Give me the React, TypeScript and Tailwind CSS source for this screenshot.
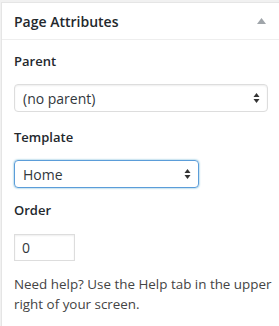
import React from "react";

function Arrows() {
  return (
    <svg width="7" height="11" viewBox="0 0 7 11" className="absolute right-[7px] top-1/2 -translate-y-1/2">
      <path d="M3.5 0.5 L6.5 4.5 L0.5 4.5 Z" fill="#333" />
      <path d="M0.5 6.5 L6.5 6.5 L3.5 10.5 Z" fill="#333" />
    </svg>
  );
}

export default function App() {
  return (
    <div
      className="w-[279px] h-[326px] bg-[#f1f1f1] pt-[2px] pl-[1px] overflow-hidden"
      style={{ fontFamily: '"Open Sans", "Noto Sans", sans-serif' }}
    >
      <div className="w-[290px] h-[340px] bg-white border border-[#e5e5e5]">
        <div className="h-[37px] border-b border-[#eeeeee] flex items-center justify-between pl-[12px] pr-[24px]">
          <span className="text-[14px] font-semibold text-[#23282d]">Page Attributes</span>
          <svg width="9" height="6" viewBox="0 0 9 6">
            <path d="M4.5 0 L9 6 L0 6 Z" fill="#a0a5aa" />
          </svg>
        </div>
        <div className="pl-[12px] pt-[11px] text-[#444]">
          <div className="text-[13px] font-semibold text-[#23282d] leading-[20px]">Parent</div>
          <div className="relative mt-[13px] w-[254px] h-[28px] border border-[#dddddd] rounded-[4px] flex items-center pl-[8px] text-[14px] text-[#32373c] shadow-[inset_0_1px_2px_rgba(0,0,0,0.07)]">
            (no parent)
            <Arrows />
          </div>
          <div className="mt-[15px] text-[13px] font-semibold text-[#23282d] leading-[20px]">Template</div>
          <div className="relative mt-[13px] w-[185px] h-[28px] border border-[#5b9dd9] rounded-[4px] flex items-center pl-[8px] text-[14px] text-[#32373c] shadow-[0_0_2px_rgba(30,140,190,0.8)]">
            Home
            <Arrows />
          </div>
          <div className="mt-[12px] text-[13px] font-semibold text-[#23282d] leading-[20px]">Order</div>
          <div className="mt-[14px] w-[61px] h-[27px] border border-[#dddddd] flex items-center pl-[7px] text-[14px] text-[#32373c] shadow-[inset_0_1px_2px_rgba(0,0,0,0.07)]">
            0
          </div>
          <p className="mt-[13px] text-[13.4px] leading-[20px] text-[#444] w-[262px]">
            Need help? Use the Help tab in the upper right of your screen.
          </p>
        </div>
      </div>
    </div>
  );
}
